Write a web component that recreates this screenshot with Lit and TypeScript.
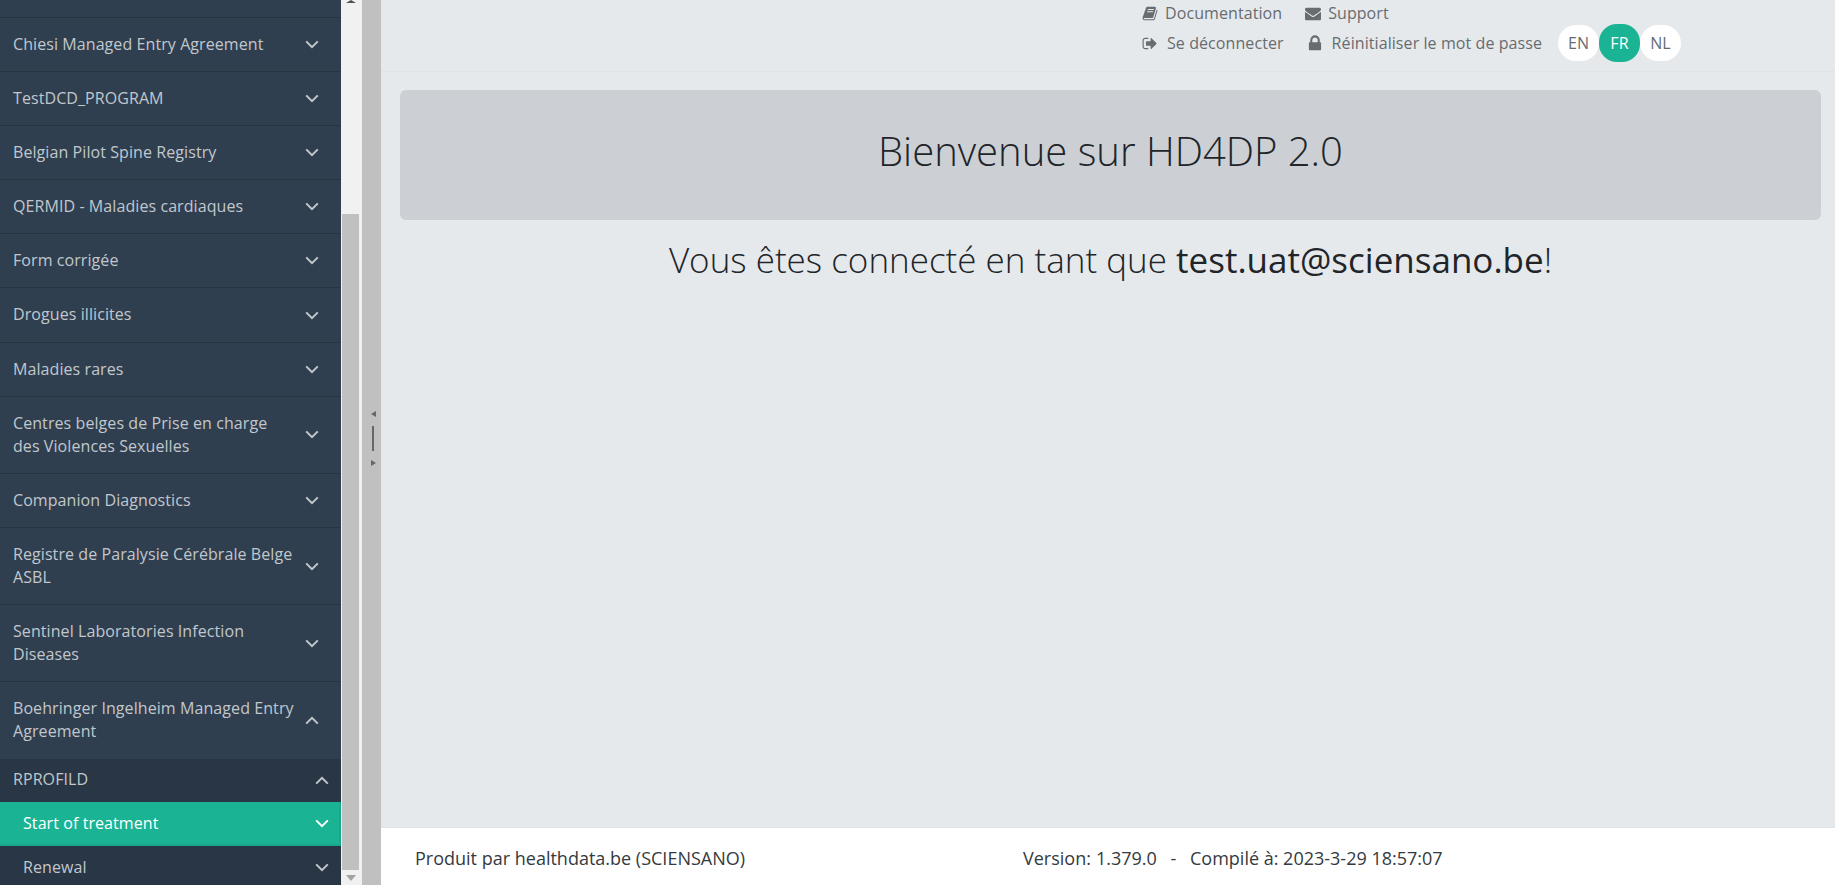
import { html, css, LitElement, svg } from "lit";
import { customElement } from "lit/decorators.js";

const MENU = [
  "Chiesi Managed Entry Agreement",
  "TestDCD_PROGRAM",
  "Belgian Pilot Spine Registry",
  "QERMID - Maladies cardiaques",
  "Form corrigée",
  "Drogues illicites",
  "Maladies rares",
  "Centres belges de Prise en charge des Violences Sexuelles",
  "Companion Diagnostics",
  "Registre de Paralysie Cérébrale Belge ASBL",
  "Sentinel Laboratories Infection Diseases",
];

const ICONS = {
  book: "M1703 478q40 57 18 129l-275 906q-19 64-76.5 107.5t-122.5 43.5h-923q-77 0-148.5-53.5t-99.5-131.5q-24-67-2-127 0-4 3-27t4-37q1-8-3-21.5t-3-19.5q2-11 8-21t16.5-23.5 16.5-23.5q23-38 45-91.5t30-91.5q3-10 .5-30t-.5-28q3-11 17-28t17-23q21-36 42-92t25-90q1-9-2.5-32t.5-28q4-13 22-30.5t22-22.5q19-26 42.5-84.5t27.5-96.5q1-8-3-25.5t-2-26.5q2-8 9-18t18-23 17-21q8-12 16.5-30.5t15-35 16-36 19.5-32 26.5-23.5 36-11.5 47.5 5.5l-1 3q38-9 51-9h761q74 0 114 56t18 130l-274 906q-36 119-71.5 153.5t-128.5 34.5h-869q-27 0-38 15-11 16-1 43 24 70 144 70h923q29 0 56-15.5t35-41.5l300-987q7-22 5-57 38 15 59 43zm-1064 2q-4 13 2 22.5t20 9.5h608q13 0 25.5-9.5t16.5-22.5l21-64q4-13-2-22.5t-20-9.5h-608q-13 0-25.5 9.5t-16.5 22.5zm-83 256q-4 13 2 22.5t20 9.5h608q13 0 25.5-9.5t16.5-22.5l21-64q4-13-2-22.5t-20-9.5h-608q-13 0-25.5 9.5t-16.5 22.5z",
  envelope: "M1792 710v794q0 66-47 113t-113 47h-1472q-66 0-113-47t-47-113v-794q44 49 101 87 362 246 497 345 57 42 92.5 65.5t94.5 48 110 24.5h2q51 0 110-24.5t94.5-48 92.5-65.5q170-123 498-345 57-39 100-87zm0-294q0 79-49 151t-122 123q-376 261-468 325-10 7-42.5 30.5t-54 38-52 32.5-57.5 27-50 9h-2q-23 0-50-9t-57.5-27-52-32.5-54-38-42.5-30.5q-91-64-262-182.5t-205-142.5q-62-42-117-115.5t-55-136.5q0-78 41.5-130t118.5-52h1472q65 0 112.5 47t47.5 113z",
  signout: "M704 1440q0 4 1 20t.5 26.5-3 23.5-10 19.5-20.5 6.5h-320q-119 0-203.5-84.5t-84.5-203.5v-704q0-119 84.5-203.5t203.5-84.5h320q13 0 22.5 9.5t9.5 22.5q0 4 1 20t.5 26.5-3 23.5-10 19.5-20.5 6.5h-320q-66 0-113 47t-47 113v704q0 66 47 113t113 47h312l11.5 1 11.5 3 8 5.5 7 9 2 13.5zm928-544q0 26-19 45l-544 544q-19 19-45 19t-45-19-19-45v-288h-448q-26 0-45-19t-19-45v-384q0-26 19-45t45-19h448v-288q0-26 19-45t45-19 45 19l544 544q19 19 19 45z",
  lock: "M320 768h512v-192q0-106-75-181t-181-75-181 75-75 181v192zm832 96v576q0 40-28 68t-68 28h-960q-40 0-68-28t-28-68v-576q0-40 28-68t68-28h32v-192q0-184 132-316t316-132 316 132 132 316v192h32q40 0 68 28t28 68z",
};

function icon(name: keyof typeof ICONS, width: number) {
  const vbW = name === "lock" ? 1152 : 1792;
  return html`<svg class="fa" viewBox="0 0 ${vbW} 1792" width=${width} height=${name === "lock" ? 19 : 17}>
    ${svg`<path d=${ICONS[name]} fill="currentColor"></path>`}
  </svg>`;
}

function chevron(up = false) {
  return html`<svg class="chev" viewBox="0 0 14 9" width="14" height="9">
    ${svg`<polyline points=${up ? "1.2,7.6 7,1.8 12.8,7.6" : "1.2,1.4 7,7.2 12.8,1.4"}
      fill="none" stroke="currentColor" stroke-width="2"></polyline>`}
  </svg>`;
}

@customElement("app-root")
export class AppRoot extends LitElement {
  static styles = css`
    * {
      box-sizing: border-box;
    }

    :host {
      display: flex;
      height: 885px;
      overflow: hidden;
      font-family: "Open Sans", sans-serif;
      color: #212529;
      background: #e6e9ec;
    }

    .sidebar {
      width: 341px;
      flex: none;
      height: 885px;
      overflow: hidden;
      background: #2f3f50;
      color: #c2c7cc;
      font-size: 16px;
      letter-spacing: 0.08px;
      line-height: 23.1px;
    }

    .stub {
      height: 18px;
      border-bottom: 1px solid #28343f;
    }

    .row {
      display: flex;
      align-items: center;
      justify-content: space-between;
      padding: 15px 22px 15px 13px;
      border-bottom: 1px solid #28343f;
    }

    .row.open {
      border-bottom: none;
    }

    .row span {
      width: 285px;
    }

    .sub {
      background: #283646;
    }

    .sub .row {
      border-bottom: none;
      padding: 10px 12px 10px 13px;
      height: 43px;
    }

    .sub .row.item {
      padding-left: 23px;
      height: 44px;
    }

    .sub .row.active {
      background: #1ab394;
      color: #fff;
      box-shadow: inset -2px -2px 0 #19a88b;
    }

    .chev {
      flex: none;
      display: block;
    }

    .scroll {
      width: 21px;
      flex: none;
      background: #f1f1f1;
      display: flex;
      flex-direction: column;
      align-items: center;
    }

    .arrow-up {
      width: 0;
      height: 0;
      border-left: 5px solid transparent;
      border-right: 5px solid transparent;
      border-bottom: 3px solid #505050;
      margin-bottom: 211px;
      margin-left: -2px;
    }

    .thumb {
      width: 17px;
      height: 656px;
      background: #c0c0c0;
      margin-left: -2px;
    }

    .arrow-down {
      width: 0;
      height: 0;
      border-left: 5px solid transparent;
      border-right: 5px solid transparent;
      border-top: 6px solid #a3a3a3;
      margin-top: 5px;
      margin-left: -2px;
    }

    .splitter {
      width: 19px;
      flex: none;
      background: #c0c0c0;
      display: flex;
      flex-direction: column;
      align-items: center;
      justify-content: center;
      gap: 9px;
      padding-bottom: 8px;
      padding-left: 3px;
    }

    .splitter i {
      display: block;
      width: 0;
      height: 0;
      border-top: 3px solid transparent;
      border-bottom: 3px solid transparent;
    }

    .splitter .left {
      border-right: 5px solid #666;
    }

    .splitter .right {
      border-left: 5px solid #666;
    }

    .splitter b {
      display: block;
      width: 2px;
      height: 25px;
      background: #666;
    }

    .main {
      flex: 1;
      min-width: 0;
      display: flex;
      flex-direction: column;
    }

    header {
      height: 72px;
      flex: none;
      border-bottom: 1px solid #dfe3e6;
      padding: 2px 0 0 761px;
      color: #666c70;
      font-size: 16px;
      letter-spacing: 0.08px;
      line-height: 21px;
    }

    .links {
      display: flex;
      align-items: center;
    }

    .links.top {
      height: 22px;
    }

    .links.bottom {
      height: 38px;
    }

    .links a {
      display: flex;
      align-items: center;
    }

    .links .doc {
      margin-right: 23px;
    }

    .links .out {
      margin-right: 24px;
    }

    .links span {
      margin-left: 7px;
    }

    .links .out span {
      margin-left: 9px;
    }

    .links .reset span {
      margin-left: 10px;
    }

    .fa {
      flex: none;
      display: block;
    }

    .pills {
      display: flex;
      align-items: center;
      margin-left: 16px;
    }

    .pill {
      width: 41px;
      height: 36px;
      border-radius: 18px;
      background: #fff;
      display: flex;
      align-items: center;
      justify-content: center;
    }

    .pill.on {
      height: 38px;
      background: #1ab394;
      color: #fff;
    }

    .body {
      flex: 1;
      padding: 18px 14px 0 19px;
      text-align: center;
    }

    .welcome {
      height: 130px;
      border-radius: 6px;
      background: #ccd0d4;
      display: flex;
      align-items: center;
      justify-content: center;
      font-size: 40px;
      font-weight: 300;
      line-height: 1.2;
      padding-bottom: 8px;
    }

    .who {
      margin-top: 19px;
      font-size: 35px;
      font-weight: 300;
      line-height: 1.2;
    }

    .who strong {
      font-weight: 400;
    }

    footer {
      height: 58px;
      flex: none;
      background: #fff;
      border-top: 1px solid #dfe3e6;
      display: flex;
      align-items: center;
      padding: 2px 0 0 34px;
      font-size: 18px;
      color: #343a40;
    }

    footer .by {
      width: 608px;
    }

    footer .version {
      margin-left: 5px;
    }

    footer .dash {
      margin: 0 9px;
    }
  `;

  render() {
    return html`
      <nav class="sidebar">
        <div class="stub"></div>
        ${MENU.map(
          (m) => html`<div class="row"><span>${m}</span>${chevron()}</div>`
        )}
        <div class="row open">
          <span>Boehringer Ingelheim Managed Entry Agreement</span>${chevron(true)}
        </div>
        <div class="sub">
          <div class="row"><span>RPROFILD</span>${chevron(true)}</div>
          <div class="row item active"><span>Start of treatment</span>${chevron()}</div>
          <div class="row item"><span>Renewal</span>${chevron()}</div>
        </div>
      </nav>
      <div class="scroll">
        <div class="arrow-up"></div>
        <div class="thumb"></div>
        <div class="arrow-down"></div>
      </div>
      <div class="splitter">
        <i class="left"></i>
        <b></b>
        <i class="right"></i>
      </div>
      <div class="main">
        <header>
          <div class="links top">
            <a class="doc">${icon("book", 16)}<span>Documentation</span></a>
            <a>${icon("envelope", 16)}<span>Support</span></a>
          </div>
          <div class="links bottom">
            <a class="out">${icon("signout", 16)}<span>Se déconnecter</span></a>
            <a class="reset">${icon("lock", 14)}<span>Réinitialiser le mot de passe</span></a>
            <div class="pills">
              <div class="pill">EN</div>
              <div class="pill on">FR</div>
              <div class="pill">NL</div>
            </div>
          </div>
        </header>
        <div class="body">
          <div class="welcome">Bienvenue sur HD4DP 2.0</div>
          <div class="who">Vous êtes connecté en tant que <strong>test.uat@sciensano.be</strong>!</div>
        </div>
        <footer>
          <div class="by">Produit par healthdata.be (SCIENSANO)</div>
          <div>Version:<span class="version">1.379.0</span><span class="dash">&nbsp;-&nbsp;</span>Compilé à: 2023-3-29 18:57:07</div>
        </footer>
      </div>
    `;
  }
}
